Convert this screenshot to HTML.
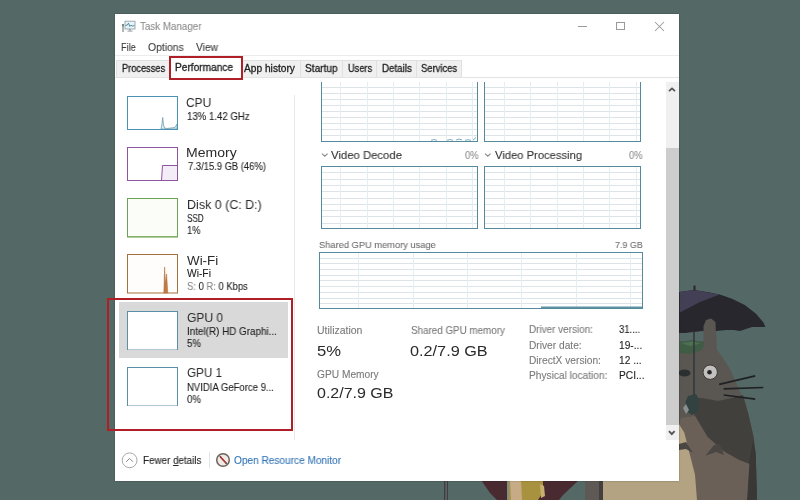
<!DOCTYPE html>
<html><head><meta charset="utf-8">
<style>
html,body{margin:0;padding:0;width:800px;height:500px;overflow:hidden;background:#556563;}
body{position:relative;font-family:"Liberation Sans",sans-serif;}
.abs{position:absolute;}
.tx{position:absolute;white-space:nowrap;line-height:1;transform-origin:0 0;font-family:"Liberation Sans",sans-serif;-webkit-text-stroke:0.1px currentColor;will-change:transform;}
.win{position:absolute;left:114.7px;top:13.7px;width:564.8px;height:467.3px;background:#fff;box-shadow:0 0 1.5px rgba(0,0,0,.35);}
.tab{position:absolute;top:59.5px;height:17.5px;background:#f0f0f0;border:1px solid #e0e0e0;border-bottom:none;box-sizing:border-box;}
.thumb{position:absolute;left:127px;width:52px;box-sizing:border-box;border:1px solid;background:#fff;}
.graph{position:absolute;box-sizing:border-box;border:1px solid #5f8e9c;}
</style></head><body>
<svg class="abs" style="left:0;top:0" width="800" height="500" viewBox="0 0 800 500">
  <rect width="800" height="500" fill="#546866"/>
  <!-- pole -->
  <rect x="444" y="478" width="4" height="22" fill="#3b3f41"/>
  <rect x="445.5" y="478" width="1.2" height="22" fill="#6c7072"/>
  <!-- maroon umbrella bottom -->
  <path d="M481 480 L579 480 L563 495 L559 500 L497 500 L490 493 Z" fill="#4a2a31"/>
  <rect x="507" y="480" width="2.5" height="20" fill="#7d8f88"/>
  <path d="M509 480 L543 480 L543 492 L538 500 L509 500 Z" fill="#a9923f"/>
  <path d="M510 480 L521 480 L522 500 L511 500 Z" fill="#c6ab86"/>
  <path d="M540 484 L544 486 L545 496 L541 498 Z" fill="#c8b070"/>
  <!-- totoro lower body -->
  <path d="M585 478 L605 478 L605 500 L585 500 Z" fill="#5e5955"/>
  <rect x="599" y="478" width="4.5" height="22" fill="#423f3c"/>
  <path d="M603 478 L680 478 L680 420 L688 420 L693 460 L697 500 L603 500 Z" fill="#b3a382"/>
  <!-- body silhouette (head color) -->
  <path d="M679 330 L703 330 L705 321 L711 318.5 L716 322 L716.5 349 L722.8 358 L730 369 L736.3 383.4 L742.6 397.8 L748.4 414 L753.6 437 L755.7 454 L757 500 L679 500 Z" fill="#5a5651"/>
  <!-- arm -->
  <path d="M688 398 L702 398 L718 401 L732 398 L743 395 L748.4 414 L753.6 437 L755.7 454 L757 500 L748 500 L749.4 464 L739 460 L724 451.6 L707.5 437 L695 416 Z" fill="#42403d"/>
  <path d="M753 440 L755.7 454 L757 500 L747 500 L748.5 466 Z" fill="#3a3836"/>
  <!-- brown belly -->
  <path d="M681 418 L695 416 L707.5 437 L724 451.6 L739 460 L749.4 464 L747 500 L697 500 L693 470 L688.6 449.5 L684.4 432.8 L679 424 Z" fill="#6a6058"/>
  <path d="M679 424 L684.4 432.8 L688.6 449.5 L695 474.7 L697 500 L679 500 Z" fill="#b3a382"/>
  <!-- belly claws -->
  <path d="M679 444 L686 442 L692.8 452.7 L686 449 L679 450 Z" fill="#4a4644"/>
  <path d="M705.4 455.8 L714 445 L720 444.3 L724 455 L716 452 Z" fill="#4a4644"/>
  <!-- umbrella -->
  <path d="M679 292 L694 290 L707 292 L719.75 294.4 L732 298.75 L744.75 305 L756 313.75 L763.5 322.5 L765.4 327 L752 327 L740 331 L734 330 L726 330 L716 331 L705 331 L695 332 L686 333 L679 333 Z" fill="#27272d"/>
  <path d="M679.8 292 L694 290 L719.75 294.4 L700 302 L679.8 312.5 Z" fill="#433f54"/>
  <rect x="693.5" y="285.5" width="2" height="5" fill="#27272d"/>
  <!-- ear -->
  <path d="M703.5 348 L703.5 326 L706 320 L711 318.5 L715.5 322 L716.5 349 Z" fill="#5a5651"/>
  <!-- background gap -->
  <path d="M679.5 333 L686 333 L695 332 L703.5 331 L703.5 341 L679.5 341 Z" fill="#546866"/>
  <!-- leaf -->
  <path d="M679.5 342 L692 340 L704.8 342.5 L702 350 L692 353.7 L679.5 353 Z" fill="#3f5c45"/>
  <path d="M681 343 L692 341.5 L701 343.5 L690 346 Z" fill="#4f6f52"/>
  <!-- stick -->
  <rect x="693.2" y="331" width="1.6" height="64" fill="#34393a"/>
  <!-- nose -->
  <ellipse cx="684.5" cy="373" rx="6" ry="3.6" fill="#2a3030"/>
  <!-- eye -->
  <circle cx="710.2" cy="372.2" r="7.2" fill="#c3c0c0" stroke="#3a3836" stroke-width="1"/>
  <circle cx="709.5" cy="372.2" r="2.3" fill="#262626"/>
  <!-- whiskers -->
  <path d="M719.2 384.3 L755.2 375.8 M723.7 388.8 L763.3 387.5 M723.7 395 L755.2 399.2" stroke="#1f2124" stroke-width="1.7" fill="none"/>
  <!-- hand -->
  <path d="M688 396 L696 394 L699.4 400 L698.5 411 L692 415 L686 411 L685.5 402 Z" fill="#324240"/><path d="M686 404 L689 410 L686 414 L683 408 Z" fill="#8a9090"/>
</svg>

<div class="win"></div>
<!-- title icon -->
<svg class="abs" style="left:117px;top:17px" width="24" height="18" viewBox="0 0 24 18">
  <rect x="8" y="4.2" width="10" height="7.8" fill="#e4f6fb" stroke="#9aa3a8" stroke-width="0.9"/>
  <polyline points="8.5,8.3 10,8.3 11.5,6.2 12.8,9.5 14,8.2 15.5,9 17.5,8.6" fill="none" stroke="#4a7a88" stroke-width="0.9"/>
  <rect x="12" y="12" width="2" height="1.6" fill="#9aa3a8"/>
  <rect x="10.5" y="13.5" width="5" height="1.2" fill="#a6adb1"/>
  <rect x="5" y="7" width="2" height="8" fill="#b0b6b8"/>
  <rect x="5" y="7" width="2" height="2.5" fill="#7a8a84"/>
</svg>
<!-- window controls -->
<div class="abs" style="left:577.5px;top:26px;width:9.5px;height:1px;background:#9a9a9a"></div>
<div class="abs" style="left:616px;top:21.5px;width:9px;height:8.5px;border:1px solid #9a9a9a;box-sizing:border-box"></div>
<svg class="abs" style="left:654px;top:21px" width="11" height="11" viewBox="0 0 11 11"><path d="M1 1L10 10M10 1L1 10" stroke="#9a9a9a" stroke-width="1.05" fill="none"/></svg>
<!-- menu separator -->
<div class="abs" style="left:115px;top:54.5px;width:564px;height:1px;background:#ececec"></div>
<!-- tab strip baseline -->
<div class="abs" style="left:115px;top:77px;width:564px;height:1px;background:#e3e3e3"></div>
<!-- tabs -->
<div class="tab" style="left:116px;width:54px;"></div>
<div class="tab" style="left:241px;width:60px;"></div>
<div class="tab" style="left:300px;width:43px;"></div>
<div class="tab" style="left:342px;width:35px;"></div>
<div class="tab" style="left:376px;width:41px;"></div>
<div class="tab" style="left:416px;width:46px;"></div>
<div class="abs" style="left:170px;top:57px;width:72px;height:21px;background:#fff;border:1px solid #d9d9d9;border-bottom:none;box-sizing:border-box"></div>
<!-- red box performance -->
<div class="abs" style="left:169px;top:55.5px;width:73.5px;height:24px;border:2.7px solid #b01e26;box-sizing:border-box"></div>
<!-- sidebar thumbs -->
<svg class="abs" style="left:127px;top:96px" width="51" height="34" viewBox="0 0 51 34"><path d="M34 33 L35 28 L35.7 21.5 L36.5 29 L37.5 32 L40 32.5 L44 32 L48 31.5 L50 28 L50 33 Z" fill="#e3f0f5" stroke="#6a9cb0" stroke-width="0.8"/><rect x="0.5" y="0.5" width="50" height="33" fill="none" stroke="#4a92b4" stroke-width="1"/></svg>
<div class="thumb" style="display:none"></div>
<svg class="abs" style="left:127px;top:147px" width="51" height="34" viewBox="0 0 51 34"><path d="M34.5 33.5 L35.5 18.5 L50.5 18.5 L50.5 33.5 Z" fill="#f4ecf6" stroke="#8d55a0" stroke-width="1"/><rect x="0.5" y="0.5" width="50" height="33" fill="none" stroke="#8d55a0" stroke-width="1"/></svg>
<svg class="abs" style="left:127px;top:198px" width="51" height="40" viewBox="0 0 51 40"><rect x="0.5" y="0.5" width="50" height="38.5" fill="#fbfdf8" stroke="#6aa352" stroke-width="1"/><line x1="1" y1="38.6" x2="50" y2="38.6" stroke="#7aae62" stroke-width="1"/></svg>
<svg class="abs" style="left:127px;top:254px" width="51" height="40" viewBox="0 0 51 40"><rect x="0.5" y="0.5" width="50" height="38.5" fill="#fffdfb" stroke="#a4703e" stroke-width="1"/><path d="M36.8 39 L37.6 13 L38.6 30 L39.6 20 L40.8 39 Z" fill="#c27a45" stroke="#b06a35" stroke-width="0.5"/></svg>
<!-- GPU selected -->
<div class="abs" style="left:118.5px;top:302px;width:169.7px;height:55.5px;background:#d9d9d9"></div>
<svg class="abs" style="left:127px;top:310.5px" width="51" height="39.5" viewBox="0 0 51 39.5"><rect x="0.5" y="0.5" width="50" height="38.5" fill="#ffffff" stroke="#5a90a6" stroke-width="1"/></svg>
<svg class="abs" style="left:127px;top:366.5px" width="51" height="39.5" viewBox="0 0 51 39.5"><rect x="0.5" y="0.5" width="50" height="38.5" fill="#ffffff" stroke="#5a90a6" stroke-width="1"/></svg>
<!-- red box gpu -->
<div class="abs" style="left:107px;top:297.5px;width:186px;height:133px;border:2.7px solid #b01e26;box-sizing:border-box"></div>
<!-- divider -->
<div class="abs" style="left:294px;top:95px;width:1px;height:345px;background:#e8e8e8"></div>
<!--GRAPHS--><svg class="abs" style="left:321px;top:79px" width="157" height="63" viewBox="0 0 157 63"><line x1="1" y1="8.5" x2="156" y2="8.5" stroke="#dde4e7" stroke-width="1"/><line x1="1" y1="14.5" x2="156" y2="14.5" stroke="#dde4e7" stroke-width="1"/><line x1="1" y1="20.5" x2="156" y2="20.5" stroke="#dde4e7" stroke-width="1"/><line x1="1" y1="26.5" x2="156" y2="26.5" stroke="#dde4e7" stroke-width="1"/><line x1="1" y1="32.5" x2="156" y2="32.5" stroke="#dde4e7" stroke-width="1"/><line x1="1" y1="38.5" x2="156" y2="38.5" stroke="#dde4e7" stroke-width="1"/><line x1="1" y1="44.5" x2="156" y2="44.5" stroke="#dde4e7" stroke-width="1"/><line x1="1" y1="50.5" x2="156" y2="50.5" stroke="#dde4e7" stroke-width="1"/><line x1="1" y1="56.5" x2="156" y2="56.5" stroke="#dde4e7" stroke-width="1"/><line x1="19.5" y1="1" x2="19.5" y2="62" stroke="#e4eff3" stroke-width="1"/><line x1="46.5" y1="1" x2="46.5" y2="62" stroke="#e4eff3" stroke-width="1"/><line x1="72.5" y1="1" x2="72.5" y2="62" stroke="#e4eff3" stroke-width="1"/><line x1="98.5" y1="1" x2="98.5" y2="62" stroke="#e4eff3" stroke-width="1"/><line x1="125.5" y1="1" x2="125.5" y2="62" stroke="#e4eff3" stroke-width="1"/><line x1="151.5" y1="1" x2="151.5" y2="62" stroke="#e4eff3" stroke-width="1"/><path d="M110 61.3 L113 60.6 L116 61.3 M126 61.3 L129 60.5 L132 61.3 M135 61 L138 60 L141 61 M144 61.3 L147 60.8 L150 61.3 M152 61 L155 58.5" stroke="#7fb0c0" stroke-width="1" fill="none"/><rect x="0.5" y="0.5" width="156" height="62" fill="none" stroke="#548a9b" stroke-width="1"/></svg>
<svg class="abs" style="left:484px;top:79px" width="157" height="63" viewBox="0 0 157 63"><line x1="1" y1="8.5" x2="156" y2="8.5" stroke="#dde4e7" stroke-width="1"/><line x1="1" y1="14.5" x2="156" y2="14.5" stroke="#dde4e7" stroke-width="1"/><line x1="1" y1="20.5" x2="156" y2="20.5" stroke="#dde4e7" stroke-width="1"/><line x1="1" y1="26.5" x2="156" y2="26.5" stroke="#dde4e7" stroke-width="1"/><line x1="1" y1="32.5" x2="156" y2="32.5" stroke="#dde4e7" stroke-width="1"/><line x1="1" y1="38.5" x2="156" y2="38.5" stroke="#dde4e7" stroke-width="1"/><line x1="1" y1="44.5" x2="156" y2="44.5" stroke="#dde4e7" stroke-width="1"/><line x1="1" y1="50.5" x2="156" y2="50.5" stroke="#dde4e7" stroke-width="1"/><line x1="1" y1="56.5" x2="156" y2="56.5" stroke="#dde4e7" stroke-width="1"/><line x1="20.5" y1="1" x2="20.5" y2="62" stroke="#e4eff3" stroke-width="1"/><line x1="46.5" y1="1" x2="46.5" y2="62" stroke="#e4eff3" stroke-width="1"/><line x1="73.5" y1="1" x2="73.5" y2="62" stroke="#e4eff3" stroke-width="1"/><line x1="99.5" y1="1" x2="99.5" y2="62" stroke="#e4eff3" stroke-width="1"/><line x1="125.5" y1="1" x2="125.5" y2="62" stroke="#e4eff3" stroke-width="1"/><line x1="152.5" y1="1" x2="152.5" y2="62" stroke="#e4eff3" stroke-width="1"/><rect x="0.5" y="0.5" width="156" height="62" fill="none" stroke="#548a9b" stroke-width="1"/></svg>
<svg class="abs" style="left:321px;top:166px" width="157" height="63" viewBox="0 0 157 63"><line x1="1" y1="6.5" x2="156" y2="6.5" stroke="#dde4e7" stroke-width="1"/><line x1="1" y1="13.5" x2="156" y2="13.5" stroke="#dde4e7" stroke-width="1"/><line x1="1" y1="19.5" x2="156" y2="19.5" stroke="#dde4e7" stroke-width="1"/><line x1="1" y1="25.5" x2="156" y2="25.5" stroke="#dde4e7" stroke-width="1"/><line x1="1" y1="32.5" x2="156" y2="32.5" stroke="#dde4e7" stroke-width="1"/><line x1="1" y1="38.5" x2="156" y2="38.5" stroke="#dde4e7" stroke-width="1"/><line x1="1" y1="44.5" x2="156" y2="44.5" stroke="#dde4e7" stroke-width="1"/><line x1="1" y1="50.5" x2="156" y2="50.5" stroke="#dde4e7" stroke-width="1"/><line x1="1" y1="57.5" x2="156" y2="57.5" stroke="#dde4e7" stroke-width="1"/><line x1="19.5" y1="1" x2="19.5" y2="62" stroke="#e4eff3" stroke-width="1"/><line x1="46.5" y1="1" x2="46.5" y2="62" stroke="#e4eff3" stroke-width="1"/><line x1="72.5" y1="1" x2="72.5" y2="62" stroke="#e4eff3" stroke-width="1"/><line x1="98.5" y1="1" x2="98.5" y2="62" stroke="#e4eff3" stroke-width="1"/><line x1="125.5" y1="1" x2="125.5" y2="62" stroke="#e4eff3" stroke-width="1"/><line x1="151.5" y1="1" x2="151.5" y2="62" stroke="#e4eff3" stroke-width="1"/><rect x="0.5" y="0.5" width="156" height="62" fill="none" stroke="#548a9b" stroke-width="1"/></svg>
<svg class="abs" style="left:484px;top:166px" width="157" height="63" viewBox="0 0 157 63"><line x1="1" y1="6.5" x2="156" y2="6.5" stroke="#dde4e7" stroke-width="1"/><line x1="1" y1="13.5" x2="156" y2="13.5" stroke="#dde4e7" stroke-width="1"/><line x1="1" y1="19.5" x2="156" y2="19.5" stroke="#dde4e7" stroke-width="1"/><line x1="1" y1="25.5" x2="156" y2="25.5" stroke="#dde4e7" stroke-width="1"/><line x1="1" y1="32.5" x2="156" y2="32.5" stroke="#dde4e7" stroke-width="1"/><line x1="1" y1="38.5" x2="156" y2="38.5" stroke="#dde4e7" stroke-width="1"/><line x1="1" y1="44.5" x2="156" y2="44.5" stroke="#dde4e7" stroke-width="1"/><line x1="1" y1="50.5" x2="156" y2="50.5" stroke="#dde4e7" stroke-width="1"/><line x1="1" y1="57.5" x2="156" y2="57.5" stroke="#dde4e7" stroke-width="1"/><line x1="20.5" y1="1" x2="20.5" y2="62" stroke="#e4eff3" stroke-width="1"/><line x1="46.5" y1="1" x2="46.5" y2="62" stroke="#e4eff3" stroke-width="1"/><line x1="73.5" y1="1" x2="73.5" y2="62" stroke="#e4eff3" stroke-width="1"/><line x1="99.5" y1="1" x2="99.5" y2="62" stroke="#e4eff3" stroke-width="1"/><line x1="125.5" y1="1" x2="125.5" y2="62" stroke="#e4eff3" stroke-width="1"/><line x1="152.5" y1="1" x2="152.5" y2="62" stroke="#e4eff3" stroke-width="1"/><rect x="0.5" y="0.5" width="156" height="62" fill="none" stroke="#548a9b" stroke-width="1"/></svg>
<svg class="abs" style="left:319px;top:252px" width="324" height="57" viewBox="0 0 324 57"><line x1="1" y1="6.5" x2="323" y2="6.5" stroke="#dde4e7" stroke-width="1"/><line x1="1" y1="11.5" x2="323" y2="11.5" stroke="#dde4e7" stroke-width="1"/><line x1="1" y1="17.5" x2="323" y2="17.5" stroke="#dde4e7" stroke-width="1"/><line x1="1" y1="23.5" x2="323" y2="23.5" stroke="#dde4e7" stroke-width="1"/><line x1="1" y1="28.5" x2="323" y2="28.5" stroke="#dde4e7" stroke-width="1"/><line x1="1" y1="34.5" x2="323" y2="34.5" stroke="#dde4e7" stroke-width="1"/><line x1="1" y1="40.5" x2="323" y2="40.5" stroke="#dde4e7" stroke-width="1"/><line x1="1" y1="46.5" x2="323" y2="46.5" stroke="#dde4e7" stroke-width="1"/><line x1="1" y1="51.5" x2="323" y2="51.5" stroke="#dde4e7" stroke-width="1"/><line x1="39.5" y1="1" x2="39.5" y2="56" stroke="#e4eff3" stroke-width="1"/><line x1="94.5" y1="1" x2="94.5" y2="56" stroke="#e4eff3" stroke-width="1"/><line x1="148.5" y1="1" x2="148.5" y2="56" stroke="#e4eff3" stroke-width="1"/><line x1="202.5" y1="1" x2="202.5" y2="56" stroke="#e4eff3" stroke-width="1"/><line x1="257.5" y1="1" x2="257.5" y2="56" stroke="#e4eff3" stroke-width="1"/><line x1="311.5" y1="1" x2="311.5" y2="56" stroke="#e4eff3" stroke-width="1"/><line x1="222" y1="55.5" x2="323" y2="55.5" stroke="#5e93a4" stroke-width="2"/><rect x="0.5" y="0.5" width="323" height="56" fill="none" stroke="#548a9b" stroke-width="1"/></svg>
<div class="abs" style="left:300px;top:78px;width:360px;height:3.5px;background:#fff"></div>
<svg class="abs" style="left:321px;top:152px" width="8" height="6" viewBox="0 0 8 6"><path d="M1 1.6L3.8 4.2L6.6 1.6" stroke="#8a8a8a" stroke-width="1.1" fill="none"/></svg>
<svg class="abs" style="left:484px;top:152px" width="8" height="6" viewBox="0 0 8 6"><path d="M1 1.6L3.8 4.2L6.6 1.6" stroke="#8a8a8a" stroke-width="1.1" fill="none"/></svg><!--/GRAPHS-->
<!-- scrollbar -->
<div class="abs" style="left:665.5px;top:81.5px;width:13.5px;height:358px;background:#f0f0f0"></div>
<div class="abs" style="left:665.5px;top:148px;width:13.5px;height:277px;background:#cdcdcd"></div>
<svg class="abs" style="left:665px;top:84px" width="14" height="12" viewBox="0 0 14 12"><path d="M4 7.2L7 4.4L10 7.2" stroke="#555" stroke-width="1.8" fill="none"/></svg>
<svg class="abs" style="left:665px;top:427px" width="14" height="12" viewBox="0 0 14 12"><path d="M4 4.2L6.8 7.2L9.6 4.2" stroke="#555" stroke-width="1.9" fill="none"/></svg>
<!-- bottom -->
<svg class="abs" style="left:121px;top:452px" width="17" height="17" viewBox="0 0 17 17"><circle cx="8.6" cy="8.3" r="7.4" fill="none" stroke="#a8a8a8" stroke-width="1"/><path d="M5.2 9.8L8.6 6.4L12 9.8" stroke="#8a8a8a" stroke-width="1" fill="none"/></svg>
<div class="abs" style="left:208.5px;top:452px;width:1px;height:16px;background:#e4e4e4"></div>
<svg class="abs" style="left:215px;top:451.5px" width="16" height="16" viewBox="0 0 16 16"><circle cx="8" cy="8" r="6.3" fill="#f2e9e4" stroke="#6e625c" stroke-width="1.5"/><path d="M4.8 4.3L11.6 11.8" stroke="#3a2a2a" stroke-width="1.3"/><path d="M5.5 4.6L11 11" stroke="#d03535" stroke-width="1.1"/></svg>

<div class='tx' style="left:140.01px;top:21.00px;font-size:11px;color:#8c8c8c;transform:scaleX(0.8898);;">Task Manager</div>
<div class='tx' style="left:120.95px;top:42.00px;font-size:10.5px;color:#3c3c3c;transform:scaleX(0.8763);;">File</div>
<div class='tx' style="left:148.13px;top:42.00px;font-size:10.5px;color:#3c3c3c;transform:scaleX(0.9860);;">Options</div>
<div class='tx' style="left:195.64px;top:42.00px;font-size:10.5px;color:#3c3c3c;transform:scaleX(0.9707);;">View</div>
<div class='tx' style="left:121.60px;top:64.00px;font-size:10.2px;color:#1e1e1e;transform:scaleX(0.9069);;-webkit-text-stroke:0.3px currentColor">Processes</div>
<div class='tx' style="left:175.39px;top:63.00px;font-size:10.2px;color:#202020;transform:scaleX(0.9929);;-webkit-text-stroke:0.3px currentColor">Performance</div>
<div class='tx' style="left:244.39px;top:64.00px;font-size:10.2px;color:#1e1e1e;transform:scaleX(0.9990);;-webkit-text-stroke:0.3px currentColor">App history</div>
<div class='tx' style="left:304.99px;top:64.00px;font-size:10.2px;color:#1e1e1e;transform:scaleX(0.9893);;-webkit-text-stroke:0.3px currentColor">Startup</div>
<div class='tx' style="left:347.89px;top:64.00px;font-size:10.2px;color:#1e1e1e;transform:scaleX(0.9069);;-webkit-text-stroke:0.3px currentColor">Users</div>
<div class='tx' style="left:382.01px;top:64.00px;font-size:10.2px;color:#1e1e1e;transform:scaleX(0.9595);;-webkit-text-stroke:0.3px currentColor">Details</div>
<div class='tx' style="left:421.43px;top:64.00px;font-size:10.2px;color:#1e1e1e;transform:scaleX(0.9250);;-webkit-text-stroke:0.3px currentColor">Services</div>
<div class='tx' style="left:186.08px;top:97.00px;font-size:12.6px;color:#2a2a2a;transform:scaleX(0.9505);-webkit-text-stroke:0;">CPU</div>
<div class='tx' style="left:187.02px;top:112.00px;font-size:10.2px;color:#1e1e1e;transform:scaleX(0.9442);;">13% 1.42 GHz</div>
<div class='tx' style="left:185.96px;top:147.00px;font-size:12.6px;color:#2a2a2a;transform:scaleX(1.1139);-webkit-text-stroke:0;">Memory</div>
<div class='tx' style="left:187.54px;top:162.00px;font-size:10.2px;color:#1e1e1e;transform:scaleX(0.9225);;">7.3/15.9 GB (46%)</div>
<div class='tx' style="left:186.95px;top:199.00px;font-size:12.6px;color:#2a2a2a;transform:scaleX(0.9902);-webkit-text-stroke:0;">Disk 0 (C: D:)</div>
<div class='tx' style="left:187.41px;top:214.00px;font-size:10.2px;color:#1e1e1e;transform:scaleX(0.7986);;">SSD</div>
<div class='tx' style="left:187.35px;top:226.00px;font-size:10.2px;color:#1e1e1e;transform:scaleX(0.9047);;">1%</div>
<div class='tx' style="left:186.70px;top:255.00px;font-size:12.6px;color:#2a2a2a;transform:scaleX(1.0623);-webkit-text-stroke:0;">Wi-Fi</div>
<div class='tx' style="left:187.28px;top:269.00px;font-size:10.2px;color:#1e1e1e;transform:scaleX(1.0067);;">Wi-Fi</div>
<div class='tx' style="left:187.33px;top:282.00px;font-size:10.2px;color:#1e1e1e;transform:scaleX(0.9259);;"><span style='color:#8a8a8a'>S:</span> 0 <span style='color:#8a8a8a'>R:</span> 0 Kbps</div>
<div class='tx' style="left:186.98px;top:312.00px;font-size:12.6px;color:#2a2a2a;transform:scaleX(0.9546);-webkit-text-stroke:0;">GPU 0</div>
<div class='tx' style="left:187.31px;top:327.00px;font-size:10.2px;color:#1e1e1e;transform:scaleX(0.9682);;">Intel(R) HD Graphi...</div>
<div class='tx' style="left:187.32px;top:339.00px;font-size:10.2px;color:#1e1e1e;transform:scaleX(0.9409);;">5%</div>
<div class='tx' style="left:187.00px;top:367.00px;font-size:12.6px;color:#2a2a2a;transform:scaleX(0.9274);-webkit-text-stroke:0;">GPU 1</div>
<div class='tx' style="left:187.33px;top:383.00px;font-size:10.2px;color:#1e1e1e;transform:scaleX(0.9354);;">NVIDIA GeForce 9...</div>
<div class='tx' style="left:187.32px;top:395.00px;font-size:10.2px;color:#1e1e1e;transform:scaleX(0.9409);;">0%</div>
<div class='tx' style="left:331.32px;top:150.00px;font-size:11.5px;color:#333;transform:scaleX(0.9858);;">Video Decode</div>
<div class='tx' style="left:465.44px;top:151.00px;font-size:10.4px;color:#8f8f8f;transform:scaleX(0.9010);;">0%</div>
<div class='tx' style="left:494.83px;top:150.00px;font-size:11.5px;color:#333;transform:scaleX(0.9744);;">Video Processing</div>
<div class='tx' style="left:629.44px;top:151.00px;font-size:10.4px;color:#8f8f8f;transform:scaleX(0.9010);;">0%</div>
<div class='tx' style="left:319.24px;top:240.00px;font-size:9.8px;color:#6e6e6e;transform:scaleX(0.9494);;">Shared GPU memory usage</div>
<div class='tx' style="left:615.21px;top:240.00px;font-size:9.6px;color:#6e6e6e;transform:scaleX(0.9307);;">7.9 GB</div>
<div class='tx' style="left:317.37px;top:326.00px;font-size:10.2px;color:#7a7a7a;transform:scaleX(1.0288);;">Utilization</div>
<div class='tx' style="left:317.00px;top:343.00px;font-size:15.5px;color:#2a2a2a;transform:scaleX(1.0709);-webkit-text-stroke:0;">5%</div>
<div class='tx' style="left:317.39px;top:370.00px;font-size:10.2px;color:#7a7a7a;transform:scaleX(1.0000);;">GPU Memory</div>
<div class='tx' style="left:317.04px;top:385.00px;font-size:15.5px;color:#2a2a2a;transform:scaleX(1.0314);-webkit-text-stroke:0;">0.2/7.9 GB</div>
<div class='tx' style="left:410.66px;top:326.00px;font-size:10.2px;color:#7a7a7a;transform:scaleX(0.9640);;">Shared GPU memory</div>
<div class='tx' style="left:410.28px;top:343.00px;font-size:15.5px;color:#2a2a2a;transform:scaleX(1.0479);-webkit-text-stroke:0;">0.2/7.9 GB</div>
<div class='tx' style="left:529.20px;top:325.00px;font-size:10.2px;color:#7a7a7a;transform:scaleX(0.9729);;">Driver version:</div>
<div class='tx' style="left:529.19px;top:341.00px;font-size:10.2px;color:#7a7a7a;transform:scaleX(1.0000);;">Driver date:</div>
<div class='tx' style="left:529.19px;top:356.00px;font-size:10.2px;color:#7a7a7a;transform:scaleX(1.0000);;">DirectX version:</div>
<div class='tx' style="left:529.19px;top:371.00px;font-size:10.2px;color:#7a7a7a;transform:scaleX(0.9948);;">Physical location:</div>
<div class='tx' style="left:619.23px;top:325.00px;font-size:10.2px;color:#1e1e1e;transform:scaleX(0.9292);;">31....</div>
<div class='tx' style="left:619.19px;top:341.00px;font-size:10.2px;color:#1e1e1e;transform:scaleX(1.0000);;">19-...</div>
<div class='tx' style="left:619.19px;top:356.00px;font-size:10.2px;color:#1e1e1e;transform:scaleX(1.0000);;">12 ...</div>
<div class='tx' style="left:619.19px;top:371.00px;font-size:10.2px;color:#1e1e1e;transform:scaleX(1.0000);;">PCI...</div>
<div class='tx' style="left:143.16px;top:456.00px;font-size:10.2px;color:#222;transform:scaleX(0.9633);;">Fewer <u style='text-decoration-thickness:1px;text-underline-offset:1px'>d</u>etails</div>
<div class='tx' style="left:234.39px;top:456.00px;font-size:10.2px;color:#3374b6;transform:scaleX(0.9908);;">Open Resource Monitor</div>
</body></html>
